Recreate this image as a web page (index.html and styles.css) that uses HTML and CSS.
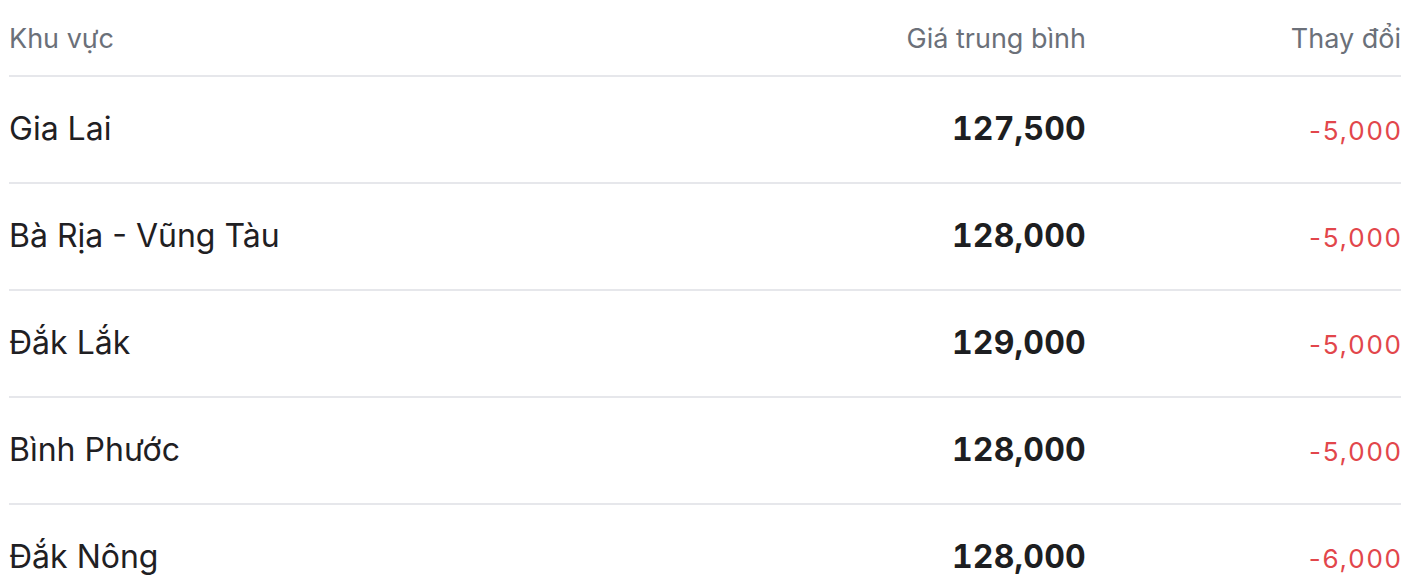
FILE: index.html
```html
<!DOCTYPE html>
<html lang="vi">
<head>
<meta charset="utf-8">
<title>Giá trung bình</title>
<link rel="stylesheet" href="styles.css">
</head>
<body>
<table class="price-table">
  <colgroup>
    <col class="col-region">
    <col class="col-price">
    <col class="col-change">
  </colgroup>
  <thead>
    <tr>
      <th class="left">Khu vực</th>
      <th class="right">Giá trung bình</th>
      <th class="right">Thay đổi</th>
    </tr>
  </thead>
  <tbody>
    <tr>
      <td class="region">Gia Lai</td>
      <td class="price">127,500</td>
      <td class="change"><span class="down">-5,000</span></td>
    </tr>
    <tr>
      <td class="region">Bà Rịa - Vũng Tàu</td>
      <td class="price">128,000</td>
      <td class="change"><span class="down">-5,000</span></td>
    </tr>
    <tr>
      <td class="region">Đắk Lắk</td>
      <td class="price">129,000</td>
      <td class="change"><span class="down">-5,000</span></td>
    </tr>
    <tr>
      <td class="region">Bình Phước</td>
      <td class="price">128,000</td>
      <td class="change"><span class="down">-5,000</span></td>
    </tr>
    <tr>
      <td class="region">Đắk Nông</td>
      <td class="price">128,000</td>
      <td class="change"><span class="down">-6,000</span></td>
    </tr>
  </tbody>
</table>
</body>
</html>
```
FILE: styles.css
```css
html, body {
  background: #ffffff;
}
body {
  margin: 8px 7px 8px 9px;
  font-family: Inter, "Noto Sans", "Liberation Sans", sans-serif;
  color: #1f2023;
}
.price-table {
  width: 100%;
  border-collapse: collapse;
  table-layout: fixed;
}
.col-price {
  width: 400px;
}
.col-change {
  width: 315px;
}
.price-table th {
  font-size: 27px;
  line-height: 40px;
  font-weight: 400;
  color: #6b7079;
  padding: 11px 0 16px 0;
  border-bottom: 2px solid #e6e7eb;
}
.price-table td {
  padding: 28px 0 29px 0;
  font-size: 32px;
  line-height: 48px;
  border-bottom: 2px solid #e6e7eb;
  vertical-align: baseline;
  white-space: nowrap;
}
.left {
  text-align: left;
}
.right {
  text-align: right;
}
.region {
  font-weight: 400;
  color: #1f2023;
  text-align: left;
}
.price {
  font-weight: 700;
  color: #1d1e21;
  text-align: right;
  font-variant-numeric: tabular-nums;
  letter-spacing: 0.2px;
}
.change {
  text-align: right;
}
.down {
  display: inline-block;
  font-size: 26px;
  line-height: 1;
  color: #e2464b;
  letter-spacing: 1.8px;
  margin-right: -1.8px;
}
```
